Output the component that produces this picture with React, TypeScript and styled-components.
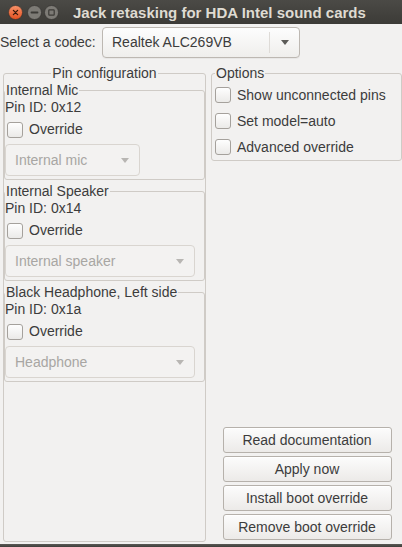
import React from "react";
import styled, { createGlobalStyle, css } from "styled-components";

const GlobalStyle = createGlobalStyle`
  html, body {
    margin: 0;
    padding: 0;
    background: #f2f1f0;
  }
  * {
    box-sizing: border-box;
  }
`;

const Window = styled.div`
  width: 402px;
  height: 547px;
  display: flex;
  flex-direction: column;
  background: #f2f1f0;
  font-family: "Liberation Sans", Arial, sans-serif;
  font-size: 14px;
  color: #3c3c3c;
  overflow: hidden;
`;

const TitleBar = styled.div`
  height: 24px;
  flex: none;
  display: flex;
  align-items: center;
  padding-left: 8px;
  background: linear-gradient(#4b4a46, #3c3b37);
`;

const WindowButton = styled.svg<{ $gap?: number }>`
  width: 15px;
  height: 15px;
  flex: none;
  margin-left: ${(p) => p.$gap ?? 0}px;
`;

const Title = styled.div`
  margin-left: 14px;
  font-weight: bold;
  font-size: 15px;
  color: #dfdbd2;
  white-space: nowrap;
`;

const Content = styled.div`
  flex: 1;
  display: flex;
  flex-direction: column;
  min-height: 0;
`;

const CodecRow = styled.div`
  display: flex;
  align-items: center;
  padding-top: 3px;
`;

const Label = styled.span`
  width: 102px;
  line-height: 17px;
`;

const Combo = styled.div<{ $width: number; $disabled?: boolean }>`
  position: relative;
  width: ${(p) => p.$width}px;
  height: ${(p) => (p.$disabled ? 32 : 31)}px;
  display: flex;
  align-items: center;
  padding-left: 9px;
  border-radius: 4px;
  ${(p) =>
    p.$disabled
      ? css`
          border: 1px solid #d9d5d0;
          background: #f3f2f1;
          color: #a8a6a3;
        `
      : css`
          border: 1px solid #bdb8b2;
          background: linear-gradient(#fdfdfd, #efeeec);
          color: #3c3c3c;
          box-shadow: 0 1px 0 rgba(0, 0, 0, 0.04);
        `}
`;

const ComboText = styled.span`
  flex: 1;
  line-height: 17px;
`;

const ComboSeparator = styled.span`
  align-self: stretch;
  width: 1px;
  margin: 4px 0;
  background: #dedbd7;
`;

const ComboArrow = styled.span<{ $disabled?: boolean }>`
  width: 29px;
  display: flex;
  justify-content: center;
  align-items: center;

  &::after {
    content: "";
    border-left: 4px solid transparent;
    border-right: 4px solid transparent;
    border-top: 5px solid ${(p) => (p.$disabled ? "#b8b6b3" : "#5c5b58")};
  }
`;

const Columns = styled.div`
  flex: 1;
  display: flex;
  margin-top: 7px;
  padding: 0 0 2px 3px;
  min-height: 0;
`;

const Frame = styled.fieldset<{ $pad?: number }>`
  margin: 0;
  min-width: 0;
  padding: 0 0 0 ${(p) => p.$pad ?? 0}px;
  border: 1px solid #cfcbc6;
  border-radius: 3px;
`;

const FrameLegend = styled.legend<{ $centered?: boolean }>`
  padding: 0 1px;
  line-height: 17px;
  color: #3c3c3c;
  ${(p) =>
    p.$centered &&
    css`
      margin: 0 auto;
    `}
`;

const PinConfigFrame = styled(Frame)`
  width: 203px;
  flex: none;
`;

const PinFrame = styled(Frame)`
  padding: 0 0 3px 0;
  margin-bottom: 3px;
`;

const PinId = styled.div`
  line-height: 17px;
`;

const CheckRow = styled.label<{ $height: number; $indent: number }>`
  display: flex;
  align-items: center;
  height: ${(p) => p.$height}px;
  padding-left: ${(p) => p.$indent}px;
  gap: 6px;
  line-height: 17px;
`;

const CheckBox = styled.span`
  width: 16px;
  height: 16px;
  flex: none;
  border: 1px solid #a5a19c;
  border-radius: 3px;
  background: linear-gradient(#fefefe, #ebeae8);
`;

const PinCombo = styled(Combo)`
  margin-top: 1px;
`;

const RightColumn = styled.div`
  flex: 1;
  display: flex;
  flex-direction: column;
  margin-left: 5px;
`;

const OptionsFrame = styled(Frame)`
  padding-bottom: 0;
`;

const ButtonStack = styled.div`
  margin-top: auto;
  margin-bottom: 2px;
  display: flex;
  flex-direction: column;
  align-items: center;
  gap: 3px;
  padding-left: 1px;
`;

const Button = styled.button`
  width: 169px;
  height: 26px;
  padding: 0;
  font-family: inherit;
  font-size: 14px;
  color: #3c3c3c;
  border: 1px solid #b6b1ab;
  border-radius: 3px;
  background: linear-gradient(#fcfcfc, #eceae8);
  box-shadow: inset 0 1px 0 #ffffff;
`;

const BottomBar = styled.div`
  height: 3px;
  flex: none;
  background: linear-gradient(#5a5955, #3f3e3a);
`;

const pins = [
  { name: "Internal Mic", id: "0x12", value: "Internal mic", width: 135 },
  { name: "Internal Speaker", id: "0x14", value: "Internal speaker", width: 190 },
  { name: "Black Headphone, Left side", id: "0x1a", value: "Headphone", width: 190 },
];

const options = ["Show unconnected pins", "Set model=auto", "Advanced override"];

const actions = [
  "Read documentation",
  "Apply now",
  "Install boot override",
  "Remove boot override",
];

export default function App() {
  return (
    <Window>
      <GlobalStyle />
      <TitleBar>
        <WindowButton viewBox="0 0 15 15">
          <defs>
            <linearGradient id="closeGrad" x1="0" y1="0" x2="0" y2="1">
              <stop offset="0" stopColor="#f8936b" />
              <stop offset="1" stopColor="#e4501f" />
            </linearGradient>
          </defs>
          <circle cx="7.5" cy="7.5" r="7" fill="url(#closeGrad)" stroke="#2f2e2b" strokeWidth="0.6" />
          <path d="M5.4 5.4 L9.6 9.6 M9.6 5.4 L5.4 9.6" stroke="#3a1a0c" strokeWidth="1.3" strokeLinecap="round" />
        </WindowButton>
        <WindowButton viewBox="0 0 15 15" $gap={4}>
          <circle cx="7.5" cy="7.5" r="7" fill="#7d7b76" stroke="#2f2e2b" strokeWidth="0.6" />
          <path d="M4.5 7.5 H10.5" stroke="#3c3b37" strokeWidth="1.8" strokeLinecap="round" />
        </WindowButton>
        <WindowButton viewBox="0 0 15 15" $gap={2}>
          <circle cx="7.5" cy="7.5" r="7" fill="#7d7b76" stroke="#2f2e2b" strokeWidth="0.6" />
          <rect x="4.8" y="4.8" width="5.4" height="5.4" rx="0.6" fill="none" stroke="#3c3b37" strokeWidth="1.2" />
        </WindowButton>
        <Title>Jack retasking for HDA Intel sound cards</Title>
      </TitleBar>
      <Content>
        <CodecRow>
          <Label>Select a codec:</Label>
          <Combo $width={198}>
            <ComboText>Realtek ALC269VB</ComboText>
            <ComboSeparator />
            <ComboArrow />
          </Combo>
        </CodecRow>
        <Columns>
          <PinConfigFrame>
            <FrameLegend $centered>Pin configuration</FrameLegend>
            {pins.map((pin) => (
              <PinFrame key={pin.id}>
                <FrameLegend>{pin.name}</FrameLegend>
                <PinId>Pin ID: {pin.id}</PinId>
                <CheckRow $height={27} $indent={2}>
                  <CheckBox />
                  Override
                </CheckRow>
                <PinCombo $width={pin.width} $disabled>
                  <ComboText>{pin.value}</ComboText>
                  <ComboArrow $disabled />
                </PinCombo>
              </PinFrame>
            ))}
          </PinConfigFrame>
          <RightColumn>
            <OptionsFrame $pad={3}>
              <FrameLegend>Options</FrameLegend>
              {options.map((opt) => (
                <CheckRow key={opt} $height={26} $indent={0}>
                  <CheckBox />
                  {opt}
                </CheckRow>
              ))}
            </OptionsFrame>
            <ButtonStack>
              {actions.map((a) => (
                <Button key={a}>{a}</Button>
              ))}
            </ButtonStack>
          </RightColumn>
        </Columns>
      </Content>
      <BottomBar />
    </Window>
  );
}
